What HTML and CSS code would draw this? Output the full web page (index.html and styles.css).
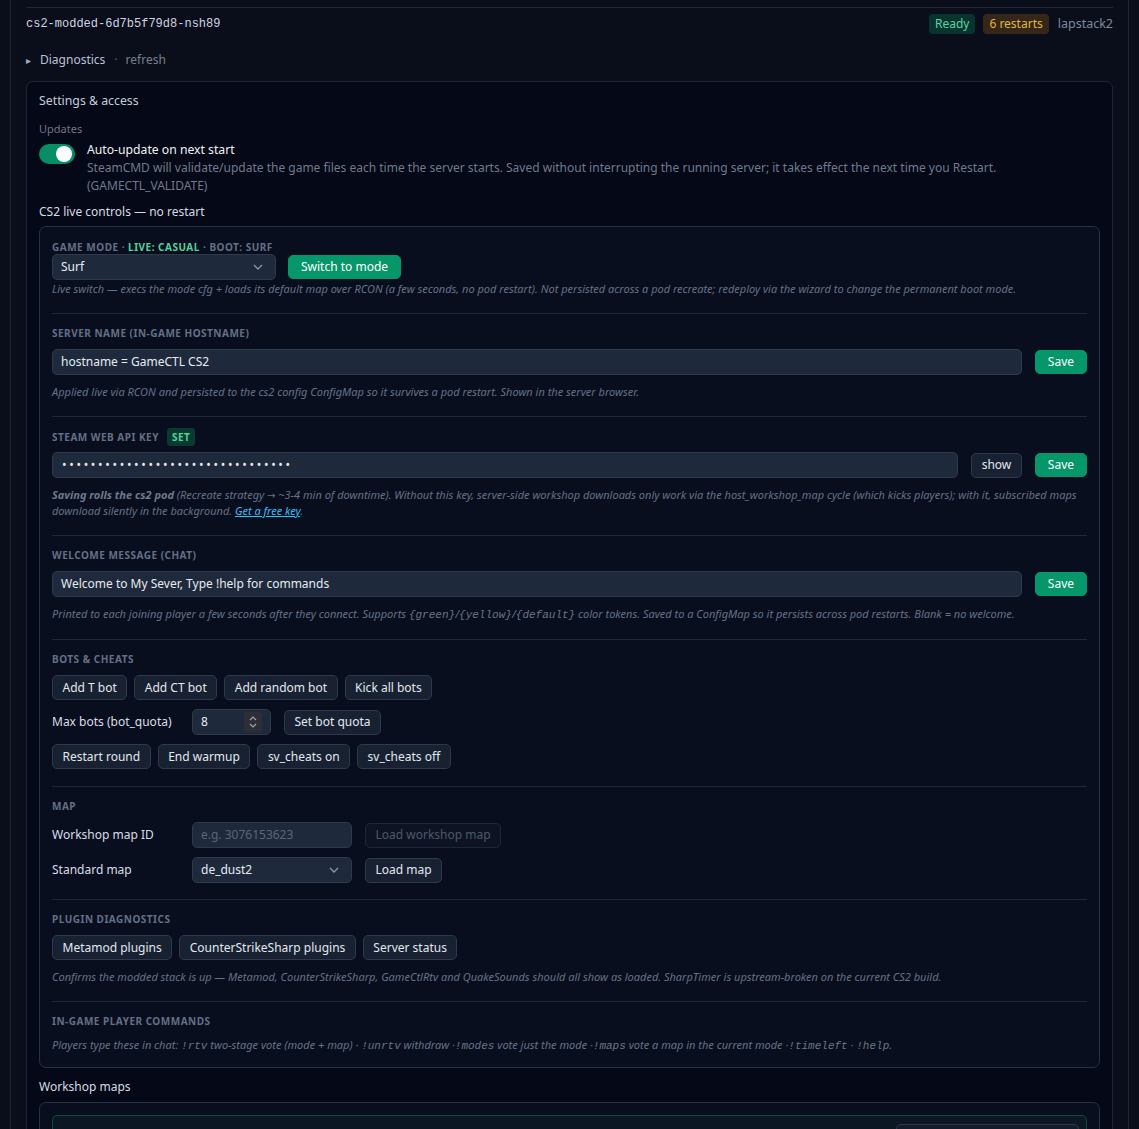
FILE: index.html
```html
<!DOCTYPE html>
<html lang="en">
<head>
<meta charset="utf-8">
<title>cs2-modded</title>
<link rel="stylesheet" href="styles.css">
</head>
<body>
<div class="outer">
  <div class="pod-row">
    <span class="pod-name">cs2-modded-6d7b5f79d8-nsh89</span>
    <div class="pod-meta">
      <span class="badge badge-ok">Ready</span>
      <span class="badge badge-warn">6 restarts</span>
      <span class="node">lapstack2</span>
    </div>
  </div>

  <div class="diag">
    <span class="caret">&#9656;</span>
    <span class="diag-title">Diagnostics</span>
    <span class="dot">·</span>
    <span class="diag-link">refresh</span>
  </div>

  <div class="settings">
    <div class="settings-title">Settings &amp; access</div>
    <div class="small-label">Updates</div>
    <div class="toggle-row">
      <span class="toggle"><span class="knob"></span></span>
      <div class="toggle-text">
        <div class="toggle-title">Auto-update on next start</div>
        <div class="toggle-desc">SteamCMD will validate/update the game files each time the server starts. Saved without interrupting the running server; it takes effect the next time you Restart. (GAMECTL_VALIDATE)</div>
      </div>
    </div>

    <div class="group-title">CS2 live controls — no restart</div>
    <div class="live">
      <section class="sec sec-mode">
        <div class="lbl">Game mode · <span class="lbl-live">Live: casual</span> · Boot: surf</div>
        <div class="row">
          <div class="select sel-mode"><span>Surf</span><svg class="chev" width="10" height="6" viewBox="0 0 10 6"><path d="M1 1l4 4 4-4" fill="none" stroke="#8a94a6" stroke-width="1.3"/></svg></div>
          <button class="btn btn-green">Switch to mode</button>
        </div>
        <p class="help help-tight">Live switch — execs the mode cfg + loads its default map over RCON (a few seconds, no pod restart). Not persisted across a pod recreate; redeploy via the wizard to change the permanent boot mode.</p>
      </section>

      <section class="sec">
        <div class="lbl">Server name (in-game hostname)</div>
        <div class="row">
          <div class="input grow">hostname = GameCTL CS2</div>
          <button class="btn btn-green">Save</button>
        </div>
        <p class="help">Applied live via RCON and persisted to the cs2 config ConfigMap so it survives a pod restart. Shown in the server browser.</p>
      </section>

      <section class="sec sec-key">
        <div class="lbl lbl-badge">Steam Web API key <span class="set">SET</span></div>
        <div class="row">
          <div class="input grow dots">••••••••••••••••••••••••••••••••</div>
          <button class="btn">show</button>
          <button class="btn btn-green">Save</button>
        </div>
        <p class="help"><b>Saving rolls the cs2 pod</b> (Recreate strategy <span class="arrow">→</span> ~3-4 min of downtime). Without this key, server-side workshop downloads only work via the host_workshop_map cycle (which kicks players); with it, subscribed maps download silently in the background. <span class="link">Get a free key</span>.</p>
      </section>

      <section class="sec">
        <div class="lbl">Welcome message (chat)</div>
        <div class="row">
          <div class="input grow">Welcome to My Sever, Type !help for commands</div>
          <button class="btn btn-green">Save</button>
        </div>
        <p class="help">Printed to each joining player a few seconds after they connect. Supports <code>{green}</code>/<code>{yellow}</code>/<code>{default}</code> color tokens. Saved to a ConfigMap so it persists across pod restarts. Blank = no welcome.</p>
      </section>

      <section class="sec sec-bots">
        <div class="lbl">Bots &amp; cheats</div>
        <div class="btn-row">
          <button class="btn">Add T bot</button>
          <button class="btn">Add CT bot</button>
          <button class="btn">Add random bot</button>
          <button class="btn">Kick all bots</button>
        </div>
        <div class="form-row">
          <span class="form-label">Max bots (bot_quota)</span>
          <div class="input num"><span>8</span><span class="spin"><svg width="10" height="16" viewBox="0 0 10 16"><path d="M2 6l3-3 3 3M2 10l3 3 3-3" fill="none" stroke="#9aa3b2" stroke-width="1.2"/></svg></span></div>
          <button class="btn">Set bot quota</button>
        </div>
        <div class="btn-row">
          <button class="btn">Restart round</button>
          <button class="btn">End warmup</button>
          <button class="btn">sv_cheats on</button>
          <button class="btn">sv_cheats off</button>
        </div>
      </section>

      <section class="sec">
        <div class="lbl">Map</div>
        <div class="form-row">
          <span class="form-label">Workshop map ID</span>
          <div class="input field placeholder">e.g. 3076153623</div>
          <button class="btn btn-disabled">Load workshop map</button>
        </div>
        <div class="form-row">
          <span class="form-label">Standard map</span>
          <div class="select field"><span>de_dust2</span><svg class="chev" width="10" height="6" viewBox="0 0 10 6"><path d="M1 1l4 4 4-4" fill="none" stroke="#8a94a6" stroke-width="1.3"/></svg></div>
          <button class="btn">Load map</button>
        </div>
      </section>

      <section class="sec">
        <div class="lbl">Plugin diagnostics</div>
        <div class="btn-row">
          <button class="btn">Metamod plugins</button>
          <button class="btn">CounterStrikeSharp plugins</button>
          <button class="btn">Server status</button>
        </div>
        <p class="help">Confirms the modded stack is up — Metamod, CounterStrikeSharp, GameCtlRtv and QuakeSounds should all show as loaded. SharpTimer is upstream-broken on the current CS2 build.</p>
      </section>

      <section class="sec sec-last">
        <div class="lbl">In-game player commands</div>
        <p class="help">Players type these in chat: <code>!rtv</code> two-stage vote (mode + map) · <code>!unrtv</code> withdraw ·<code>!modes</code> vote just the mode ·<code>!maps</code> vote a map in the current mode ·<code>!timeleft</code> · <code>!help</code>.</p>
      </section>
    </div>

    <div class="group-title ws-title">Workshop maps</div>
    <div class="ws-card">
      <div class="ws-panel">
        <div class="ws-btn"></div>
      </div>
    </div>
  </div>
</div>
</body>
</html>
```

FILE: styles.css
```css
* { box-sizing: border-box; }
html, body { margin: 0; padding: 0; }
body {
  background: #0a0e1b;
  color: #e2e8f0;
  font-family: "Noto Sans", "Open Sans", sans-serif;
  font-size: 12px;
  line-height: 18px;
  height: 1129px;
  overflow: hidden;
}
.outer {
  margin: 0 10px;
  border: 1px solid #1c2332;
  border-top: none;
  padding: 7px 15px 0;
  background: #0a0e1b;
}
.pod-row {
  border-top: 1px solid #1f2737;
  padding: 6px 0;
  display: flex;
  align-items: center;
  justify-content: space-between;
}
.pod-name {
  font-family: "Liberation Mono", monospace;
  font-size: 12px;
  color: #cdd5e0;
}
.pod-meta { display: flex; align-items: center; gap: 8px; }
.badge {
  display: inline-block;
  height: 20px;
  line-height: 20px;
  padding: 0 6px;
  border-radius: 4px;
  font-size: 12px;
}
.badge-ok { background: #07352d; color: #5fd1a3; }
.badge-warn { background: #35261a; color: #e2b53c; }
.node { color: #7f899b; font-size: 12.5px; margin-left: 1px; }

.diag {
  margin-top: 11px;
  display: flex;
  align-items: center;
  color: #b4bfcd;
}
.caret { font-size: 10px; color: #a3adbb; width: 14px; }
.diag-title { color: #b9c3d1; }
.dot { color: #5c6677; margin: 0 8px 0 9px; }
.diag-link { color: #77818f; }

.settings {
  margin-top: 12px;
  border: 1px solid #1e2636;
  border-radius: 7px;
  background: #050816;
  padding: 10px 12px 0;
}
.settings-title { color: #c3ccd8; font-size: 12.3px; }
.small-label {
  margin-top: 11px;
  font-size: 11px;
  line-height: 16px;
  color: #6c7687;
}
.toggle-row {
  display: flex;
  align-items: flex-start;
  gap: 12px;
  margin-top: 4px;
}
.toggle {
  flex: none;
  width: 36px;
  height: 20px;
  margin-top: 3px;
  border-radius: 10px;
  background: #078e65;
  position: relative;
}
.knob {
  position: absolute;
  right: 3px;
  top: 2px;
  width: 16px;
  height: 16px;
  border-radius: 50%;
  background: #ffffff;
}
.toggle-title { color: #eef2f7; font-size: 12.2px; }
.toggle-desc { color: #6f7a8c; }

.group-title {
  margin-top: 8px;
  color: #d4dbe5;
}
.live {
  margin-top: 5px;
  border: 1px solid #273044;
  border-radius: 7px;
  background: #090e1e;
  padding: 0 12px;
}
.sec {
  padding: 12px 0 16px;
  border-bottom: 1px solid #1f2737;
}
.sec-mode { padding-top: 13px; }
.sec-key { padding-top: 11px; }
.sec-bots { padding-bottom: 17px; }
.sec-last { border-bottom: none; padding-bottom: 13px; }
.lbl {
  font-size: 10px;
  line-height: 14px;
  font-weight: 700;
  letter-spacing: 0.05em;
  text-transform: uppercase;
  color: #637086;
  margin-bottom: 9px;
}
.sec-mode .lbl { margin-bottom: 0; }
.lbl-live { color: #4fd39c; }
.lbl-badge { display: flex; align-items: center; gap: 8px; height: 18px; margin-bottom: 6px; }
.set {
  display: inline-block;
  background: #083a30;
  color: #4fd39c;
  border-radius: 3px;
  padding: 2px 5px;
  line-height: 14px;
  font-size: 10px;
}
.row { display: flex; align-items: center; gap: 13px; }
.sec-mode .row { gap: 12px; }
.grow { flex: 1; }
.input, .select {
  height: 26px;
  border: 1px solid #2e394b;
  background: #1e293b;
  border-radius: 5px;
  padding: 0 8px;
  display: flex;
  align-items: center;
  color: #e6ebf2;
}
.select { justify-content: space-between; padding-right: 12px; }
.sel-mode { width: 224px; }
.dots { letter-spacing: 2.7px; font-size: 12px; padding-left: 9px; }
.btn {
  font-family: inherit;
  font-size: 12px;
  line-height: 18px;
  height: 25px;
  padding: 0 9.5px;
  border: 1px solid #2e394b;
  background: #182131;
  color: #e2e8f0;
  border-radius: 5px;
  cursor: pointer;
  white-space: nowrap;
}
.btn-green {
  background: #05976a;
  border-color: #05976a;
  color: #ffffff;
  height: 24px;
  padding: 0 12px;
}
.btn-disabled {
  background: #0d1322;
  border-color: #1e2637;
  color: #4d586a;
}
.help {
  margin: 9px 0 0;
  font-size: 11px;
  line-height: 16px;
  font-style: italic;
  color: #657186;
}
.help-tight { margin-top: 1px; }
.help b { font-weight: 700; color: #6d798b; }
.arrow { font-family: "DejaVu Sans", sans-serif; font-style: normal; font-size: 10px; line-height: 0; }
.link { color: #38bdf8; text-decoration: underline; }
code {
  font-family: "Liberation Mono", monospace;
  font-size: 11px;
  font-style: italic;
  color: #6a7587;
}
.btn-row { display: flex; gap: 7px; }
.form-row {
  display: flex;
  align-items: center;
  margin-top: 9px;
}
.form-row .form-label { width: 140px; color: #d7dee8; }
.form-row .btn { margin-left: 13px; }
.num { width: 79px; justify-content: space-between; padding-right: 8px; }
.spin {
  width: 18px;
  height: 20px;
  background: #2e2f36;
  border-radius: 3px;
  display: flex;
  align-items: center;
  justify-content: center;
}
.field { width: 160px; }
.placeholder { color: #5c6678; }
.btn-row + .form-row { margin-top: 9px; }
.form-row + .btn-row { margin-top: 9px; }
.lbl + .form-row { margin-top: 0; }

.ws-title { margin-top: 10px; }
.ws-card {
  margin-top: 6px;
  border: 1px solid #273044;
  border-radius: 7px;
  background: #090e1e;
  padding: 12px 12px 0;
  height: 60px;
}
.ws-panel {
  border: 1px solid #124a3b;
  border-radius: 5px;
  background: #0b1824;
  height: 60px;
  display: flex;
  justify-content: flex-end;
  padding: 8px 7px 0 0;
}
.ws-btn {
  width: 183px;
  height: 30px;
  border: 1px solid #2e394b;
  border-radius: 5px;
  background: #131c2c;
}
```
